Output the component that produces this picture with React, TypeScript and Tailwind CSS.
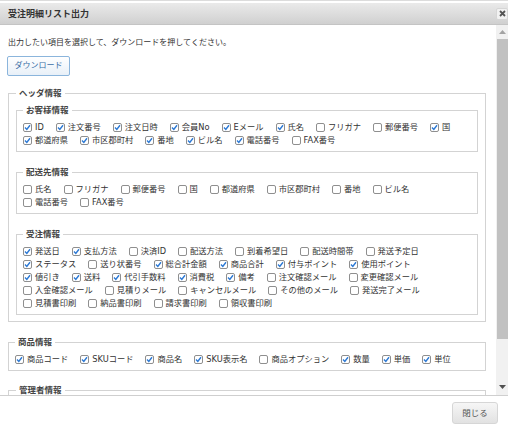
import React from "react"

type Item = [string, boolean]

const customerRows: Item[][] = [
  [["ID", true], ["注文番号", true], ["注文日時", true], ["会員No", true], ["Eメール", true], ["氏名", true], ["フリガナ", false], ["郵便番号", false], ["国", true]],
  [["都道府県", true], ["市区郡町村", true], ["番地", true], ["ビル名", true], ["電話番号", true], ["FAX番号", false]],
]

const shippingRows: Item[][] = [
  [["氏名", false], ["フリガナ", false], ["郵便番号", false], ["国", false], ["都道府県", false], ["市区郡町村", false], ["番地", false], ["ビル名", false]],
  [["電話番号", false], ["FAX番号", false]],
]

const orderRows: Item[][] = [
  [["発送日", true], ["支払方法", true], ["決済ID", false], ["配送方法", false], ["到着希望日", false], ["配送時間帯", false], ["発送予定日", false]],
  [["ステータス", true], ["送り状番号", false], ["総合計金額", true], ["商品合計", true], ["付与ポイント", true], ["使用ポイント", true]],
  [["値引き", true], ["送料", true], ["代引手数料", true], ["消費税", true], ["備考", true], ["注文確認メール", false], ["変更確認メール", false]],
  [["入金確認メール", false], ["見積りメール", false], ["キャンセルメール", false], ["その他のメール", false], ["発送完了メール", false]],
  [["見積書印刷", false], ["納品書印刷", false], ["請求書印刷", false], ["領収書印刷", false]],
]

const productRows: Item[][] = [
  [["商品コード", true], ["SKUコード", true], ["商品名", true], ["SKU表示名", true], ["商品オプション", false], ["数量", true], ["単価", true], ["単位", true]],
]

function CheckBox({ checked }: { checked: boolean }) {
  return (
    <span className="w-[9px] h-[9px] shrink-0 border border-[#8f8f8f] rounded-[2px] bg-white flex items-center justify-center">
      {checked && (
        <svg width="7" height="7" viewBox="0 0 7 7">
          <path d="M1 3.6 L2.8 5.4 L6 1.3" fill="none" stroke="#2b78d4" strokeWidth="1.4" />
        </svg>
      )}
    </span>
  )
}

function Rows({ rows }: { rows: Item[][] }) {
  return (
    <div className="flex flex-col">
      {rows.map((row, i) => (
        <div key={i} className="flex h-[13px] items-center">
          {row.map(([label, checked]) => (
            <label key={label} className="flex items-center gap-[3px] mr-[12px] text-[8.25px] leading-[13px] whitespace-nowrap">
              <CheckBox checked={checked} />
              <span>{label}</span>
            </label>
          ))}
        </div>
      ))}
    </div>
  )
}

function Group({ title, rows, className = "" }: { title: string; rows: Item[][]; className?: string }) {
  return (
    <fieldset className={`border border-[#d3d3d3] pl-[6px] pr-[6px] pt-[5px] pb-[4px] ${className}`}>
      <legend className="px-[3px] text-[8.5px] leading-[12px] font-bold text-[#444]">{title}</legend>
      <Rows rows={rows} />
    </fieldset>
  )
}

export default function App() {
  return (
    <div className="w-[508px] h-[433px] bg-white overflow-hidden text-[#333] font-['DejaVu_Sans','Noto_Sans_CJK_JP',sans-serif]">
      {/* タイトルバー */}
      <div className="h-[3px] border-t border-[#dcdcdc] bg-white" />
      <div className="h-[22px] flex items-center justify-between pl-[8px] bg-gradient-to-b from-[#eaeaea] to-[#d0d0d0] border-b border-[#c4c4c4]">
        <span className="text-[9px] font-bold leading-[12px] text-[#333]">受注明細リスト出力</span>
        <button className="w-[12px] h-[12px] flex items-center justify-center bg-[#f2f2f2] border border-[#d6d6d6] rounded-[2px]">
          <svg width="7" height="7" viewBox="0 0 7 7">
            <path d="M1 1 L6 6 M6 1 L1 6" stroke="#555" strokeWidth="1.8" />
          </svg>
        </button>
      </div>

      {/* 本体 */}
      <div className="flex h-[371px] border-b border-[#cfcfcf]">
        <div className="flex-1 overflow-hidden pl-[8px] pr-[10px] pt-[12px]">
          <p className="text-[8px] leading-[12px]">出力したい項目を選択して、ダウンロードを押してください。</p>
          <button className="mt-[7px] -ml-px w-[63px] h-[20px] border border-[#8bb5dc] rounded-[2px] bg-gradient-to-b from-white to-[#e8f0f8] text-[8px] text-[#3a6ea6]">
            ダウンロード
          </button>

          <fieldset className="mt-[11px] border border-[#d3d3d3] pl-[7px] pr-[7px] pt-[5px] pb-[6px]">
            <legend className="px-[3px] text-[8.5px] leading-[12px] font-bold text-[#444]">ヘッダ情報</legend>
            <Group title="お客様情報" rows={customerRows} />
            <Group title="配送先情報" rows={shippingRows} className="mt-[14px]" />
            <Group title="受注情報" rows={orderRows} className="mt-[14px]" />
          </fieldset>

          <Group title="商品情報" rows={productRows} className="mt-[14px]" />
          <fieldset className="mt-[13px] border border-[#d3d3d3] pl-[7px] h-[40px]">
            <legend className="px-[3px] text-[8.5px] leading-[12px] font-bold text-[#444]">管理者情報</legend>
          </fieldset>
        </div>

        {/* スクロールバー */}
        <div className="w-[12px] bg-[#f1f1f1] flex flex-col items-stretch">
          <div className="h-[14px] flex items-center justify-center">
            <svg width="7" height="4" viewBox="0 0 7 4">
              <path d="M0 4 L3.5 0 L7 4 Z" fill="#a3a3a3" />
            </svg>
          </div>
          <div className="h-[300px] ml-px bg-[#c1c1c1]" />
          <div className="flex-1" />
          <div className="h-[16px] flex items-center justify-center">
            <svg width="7" height="4" viewBox="0 0 7 4">
              <path d="M0 0 L7 0 L3.5 4 Z" fill="#505050" />
            </svg>
          </div>
        </div>
      </div>

      {/* フッター */}
      <div className="flex justify-end pr-[10px] pt-[6px]">
        <button className="w-[46px] h-[22px] border border-[#d6d6d6] rounded-[3px] bg-gradient-to-b from-[#f6f6f6] to-[#e2e2e2] text-[8.5px] text-[#555]">
          閉じる
        </button>
      </div>
    </div>
  )
}
